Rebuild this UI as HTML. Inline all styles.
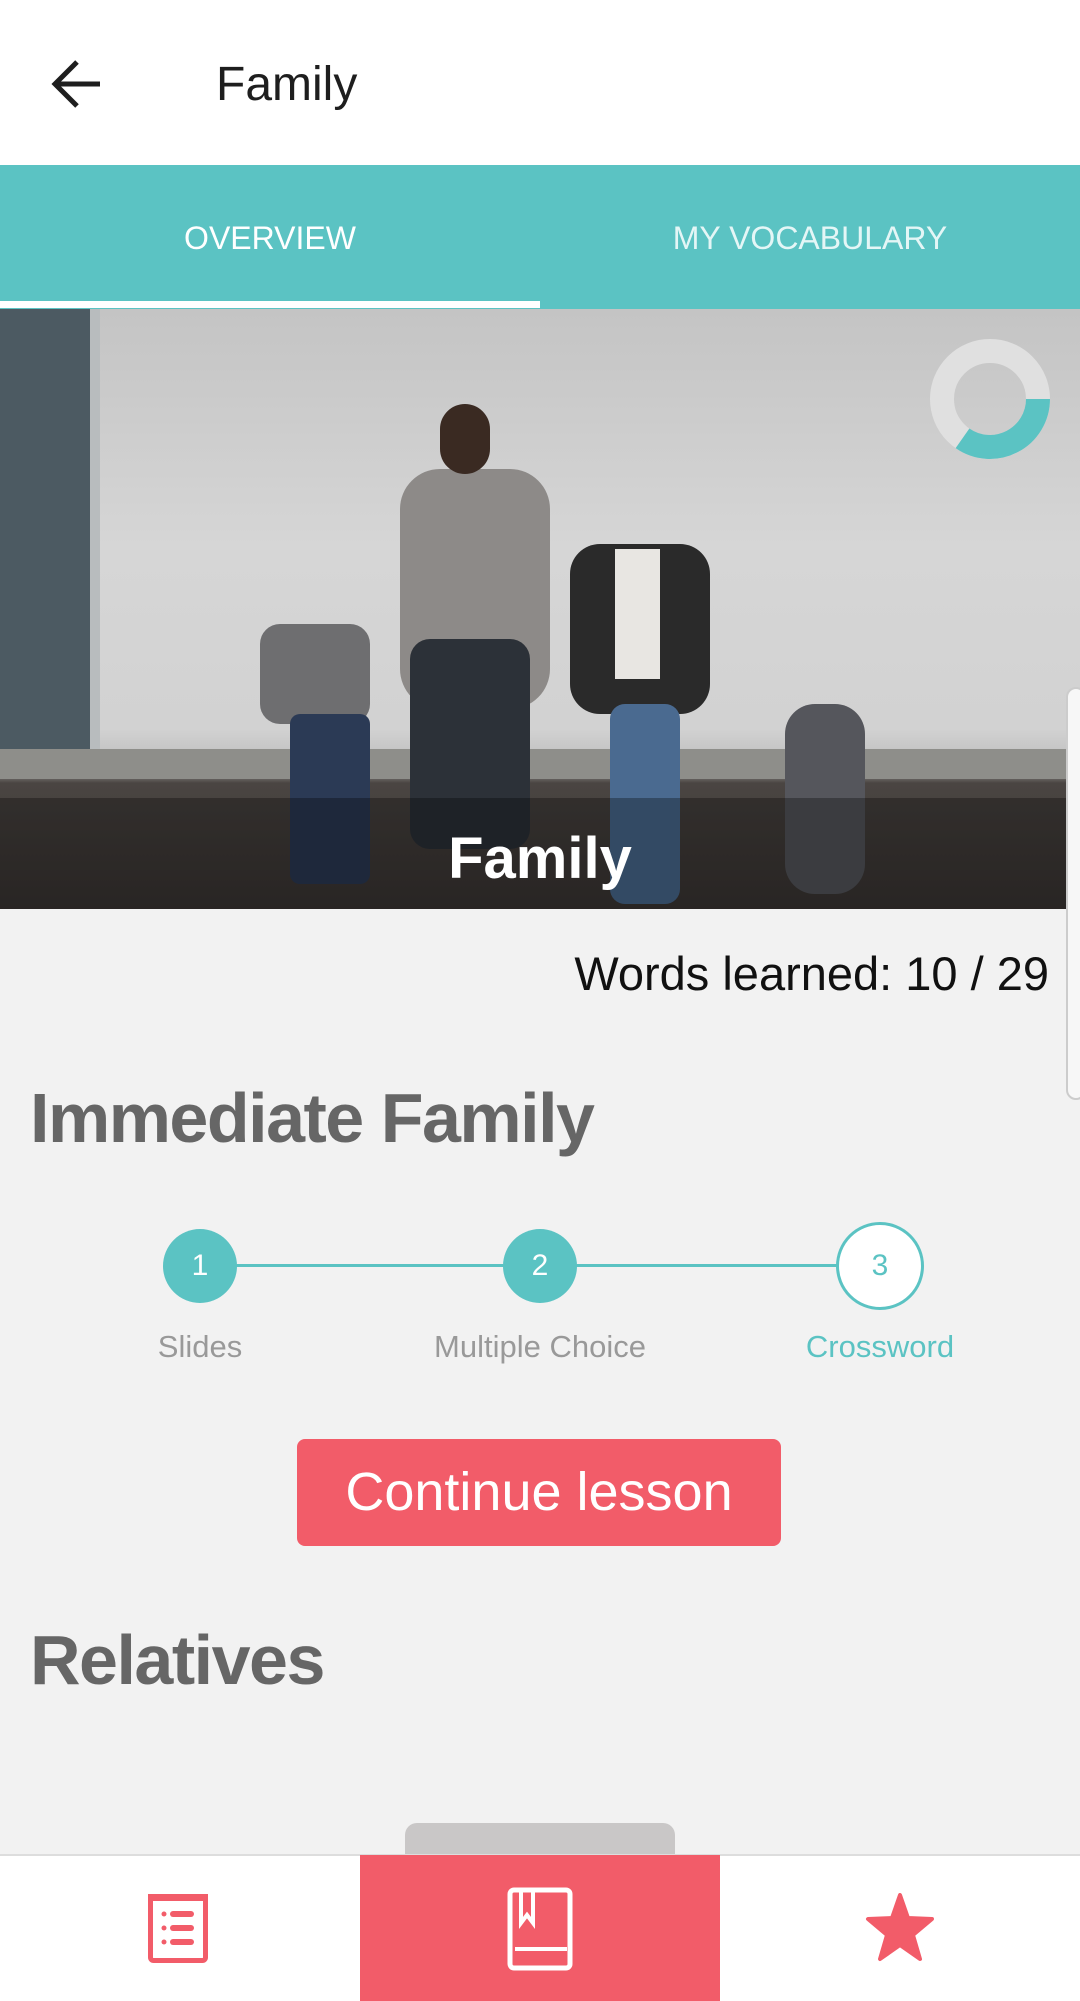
<!DOCTYPE html>
<html><head><meta charset="utf-8"><style>
*{margin:0;padding:0;box-sizing:border-box}
body{width:1080px;height:2001px;overflow:hidden;background:#f2f2f2;font-family:"Liberation Sans",sans-serif;position:relative}
.abs{position:absolute}
</style></head><body>
<div class="abs" style="left:0;top:0;width:1080px;height:165px;background:#fff"></div>
<svg class="abs" style="left:50px;top:57px" width="54" height="54" viewBox="0 0 54 54"><path d="M50 27H6M27 5L5 27L27 49" stroke="#1e1e1e" stroke-width="5" fill="none"/></svg>
<div class="abs" style="left:216px;top:57px;font-size:48px;font-weight:500;color:#1e1e1e">Family</div>
<div class="abs" style="left:0;top:165px;width:1080px;height:144px;background:#5bc3c3"></div>
<div class="abs" style="left:0;top:301px;width:540px;height:7px;background:#fff"></div>
<div class="abs" style="left:0;top:220px;width:540px;text-align:center;color:#fff;font-size:32px">OVERVIEW</div>
<div class="abs" style="left:540px;top:220px;width:540px;text-align:center;color:#e4f6f6;font-size:32px">MY VOCABULARY</div>
<div class="abs" style="left:0;top:309px;width:1080px;height:600px;overflow:hidden;background:linear-gradient(#c4c4c4,#d6d6d6 40%,#d2d2d2 70%,#bdbdbd 76%,#4a4542 79%,#3b3634)">
 <div class="abs" style="left:0;top:0;width:90px;height:440px;background:#4c5a62"></div>
 <div class="abs" style="left:90px;top:0;width:10px;height:470px;background:#b8bcbe"></div>
 <div class="abs" style="left:0;top:440px;width:1080px;height:30px;background:#8e8e8a"></div>
 <div class="abs" style="left:400px;top:160px;width:150px;height:240px;background:#8d8a88;border-radius:40px"></div>
 <div class="abs" style="left:410px;top:330px;width:120px;height:210px;background:#2c3138;border-radius:20px"></div>
 <div class="abs" style="left:440px;top:95px;width:50px;height:70px;background:#3a2a22;border-radius:25px"></div>
 <div class="abs" style="left:570px;top:235px;width:140px;height:170px;background:#2a2a2a;border-radius:30px"></div>
 <div class="abs" style="left:615px;top:240px;width:45px;height:130px;background:#e8e6e2"></div>
 <div class="abs" style="left:610px;top:395px;width:70px;height:200px;background:#4a6a90;border-radius:15px"></div>
 <div class="abs" style="left:260px;top:315px;width:110px;height:100px;background:#6e6e70;border-radius:20px"></div>
 <div class="abs" style="left:290px;top:405px;width:80px;height:170px;background:#2b3a55;border-radius:10px"></div>
 <div class="abs" style="left:785px;top:395px;width:80px;height:190px;background:#55565c;border-radius:30px"></div>
 <div class="abs" style="left:0;top:489px;width:1080px;height:111px;background:rgba(0,0,0,0.3)"></div>
 <div class="abs" style="left:0;top:516px;width:1080px;text-align:center;color:#fff;font-size:58px;font-weight:bold">Family</div>
</div>
<svg class="abs" style="left:930px;top:339px" width="120" height="120" viewBox="0 0 120 120"><circle cx="60" cy="60" r="48" stroke="#e0e0e0" stroke-width="24" fill="none"/><path d="M108 60A48 48 0 0 1 32.5 99.3" stroke="#5bc3c3" stroke-width="24" fill="none"/></svg>
<div class="abs" style="right:31px;top:946px;font-size:47px;color:#111">Words learned: 10 / 29</div>
<div class="abs" style="left:1066px;top:687px;width:20px;height:413px;border:2px solid #ccc;border-radius:10px;background:#f7f7f7"></div>
<div class="abs" style="left:30px;top:1078px;font-size:70px;font-weight:bold;color:#666;letter-spacing:-1.5px">Immediate Family</div>
<div class="abs" style="left:200px;top:1264px;width:680px;height:3px;background:#5bc3c3"></div>
<div class="abs" style="left:163px;top:1229px;width:74px;height:74px;border-radius:50%;background:#5bc3c3;color:#fff;font-size:30px;text-align:center;line-height:74px">1</div>
<div class="abs" style="left:503px;top:1229px;width:74px;height:74px;border-radius:50%;background:#5bc3c3;color:#fff;font-size:30px;text-align:center;line-height:74px">2</div>
<div class="abs" style="left:836px;top:1222px;width:88px;height:88px;border-radius:50%;background:#fff;border:3px solid #5bc3c3;color:#5bc3c3;font-size:30px;text-align:center;line-height:82px">3</div>
<div class="abs" style="left:100px;top:1329px;width:200px;text-align:center;font-size:31px;color:#999">Slides</div>
<div class="abs" style="left:380px;top:1329px;width:320px;text-align:center;font-size:31px;color:#999">Multiple Choice</div>
<div class="abs" style="left:740px;top:1329px;width:280px;text-align:center;font-size:31px;color:#5bc3c3">Crossword</div>
<div class="abs" style="left:297px;top:1439px;width:484px;height:107px;background:#f25c69;border-radius:8px;color:#fff;font-size:54px;text-align:center;line-height:107px">Continue lesson</div>
<div class="abs" style="left:30px;top:1620px;font-size:70px;font-weight:bold;color:#666;letter-spacing:-1.5px">Relatives</div>
<div class="abs" style="left:405px;top:1823px;width:270px;height:40px;background:#c9c7c7;border-radius:12px 12px 0 0"></div>
<div class="abs" style="left:0;top:1854px;width:1080px;height:147px;background:#fff;border-top:2px solid #ddd"></div>
<div class="abs" style="left:360px;top:1855px;width:360px;height:146px;background:#f25c69"></div>
<svg class="abs" style="left:148px;top:1894px" width="60" height="72" viewBox="0 0 60 72"><rect x="2.5" y="2.5" width="55" height="64" rx="3" fill="none" stroke="#f25c69" stroke-width="5"/><rect x="0" y="0" width="60" height="7" fill="#f25c69"/><g fill="#f25c69"><circle cx="16" cy="20" r="2.5"/><circle cx="16" cy="34" r="2.5"/><circle cx="16" cy="48" r="2.5"/><rect x="22" y="17" width="24" height="6" rx="3"/><rect x="22" y="31" width="24" height="6" rx="3"/><rect x="22" y="45" width="24" height="6" rx="3"/></g></svg>
<svg class="abs" style="left:505px;top:1887px" width="70" height="84" viewBox="0 0 70 84"><rect x="5" y="3" width="60" height="78" rx="4" fill="none" stroke="#fff" stroke-width="5"/><path d="M10 62H62" stroke="#fff" stroke-width="4"/><path d="M16 5V36L22 28L28 36V5" fill="none" stroke="#fff" stroke-width="4"/></svg>
<svg class="abs" style="left:865px;top:1893px" width="70" height="72" viewBox="0 0 70 72"><path d="M35 2L43 25L67 26L48 42L55 66L35 52L15 66L22 42L3 26L27 25Z" fill="#f25c69" stroke="#f25c69" stroke-width="4" stroke-linejoin="round"/></svg>
</body></html>
